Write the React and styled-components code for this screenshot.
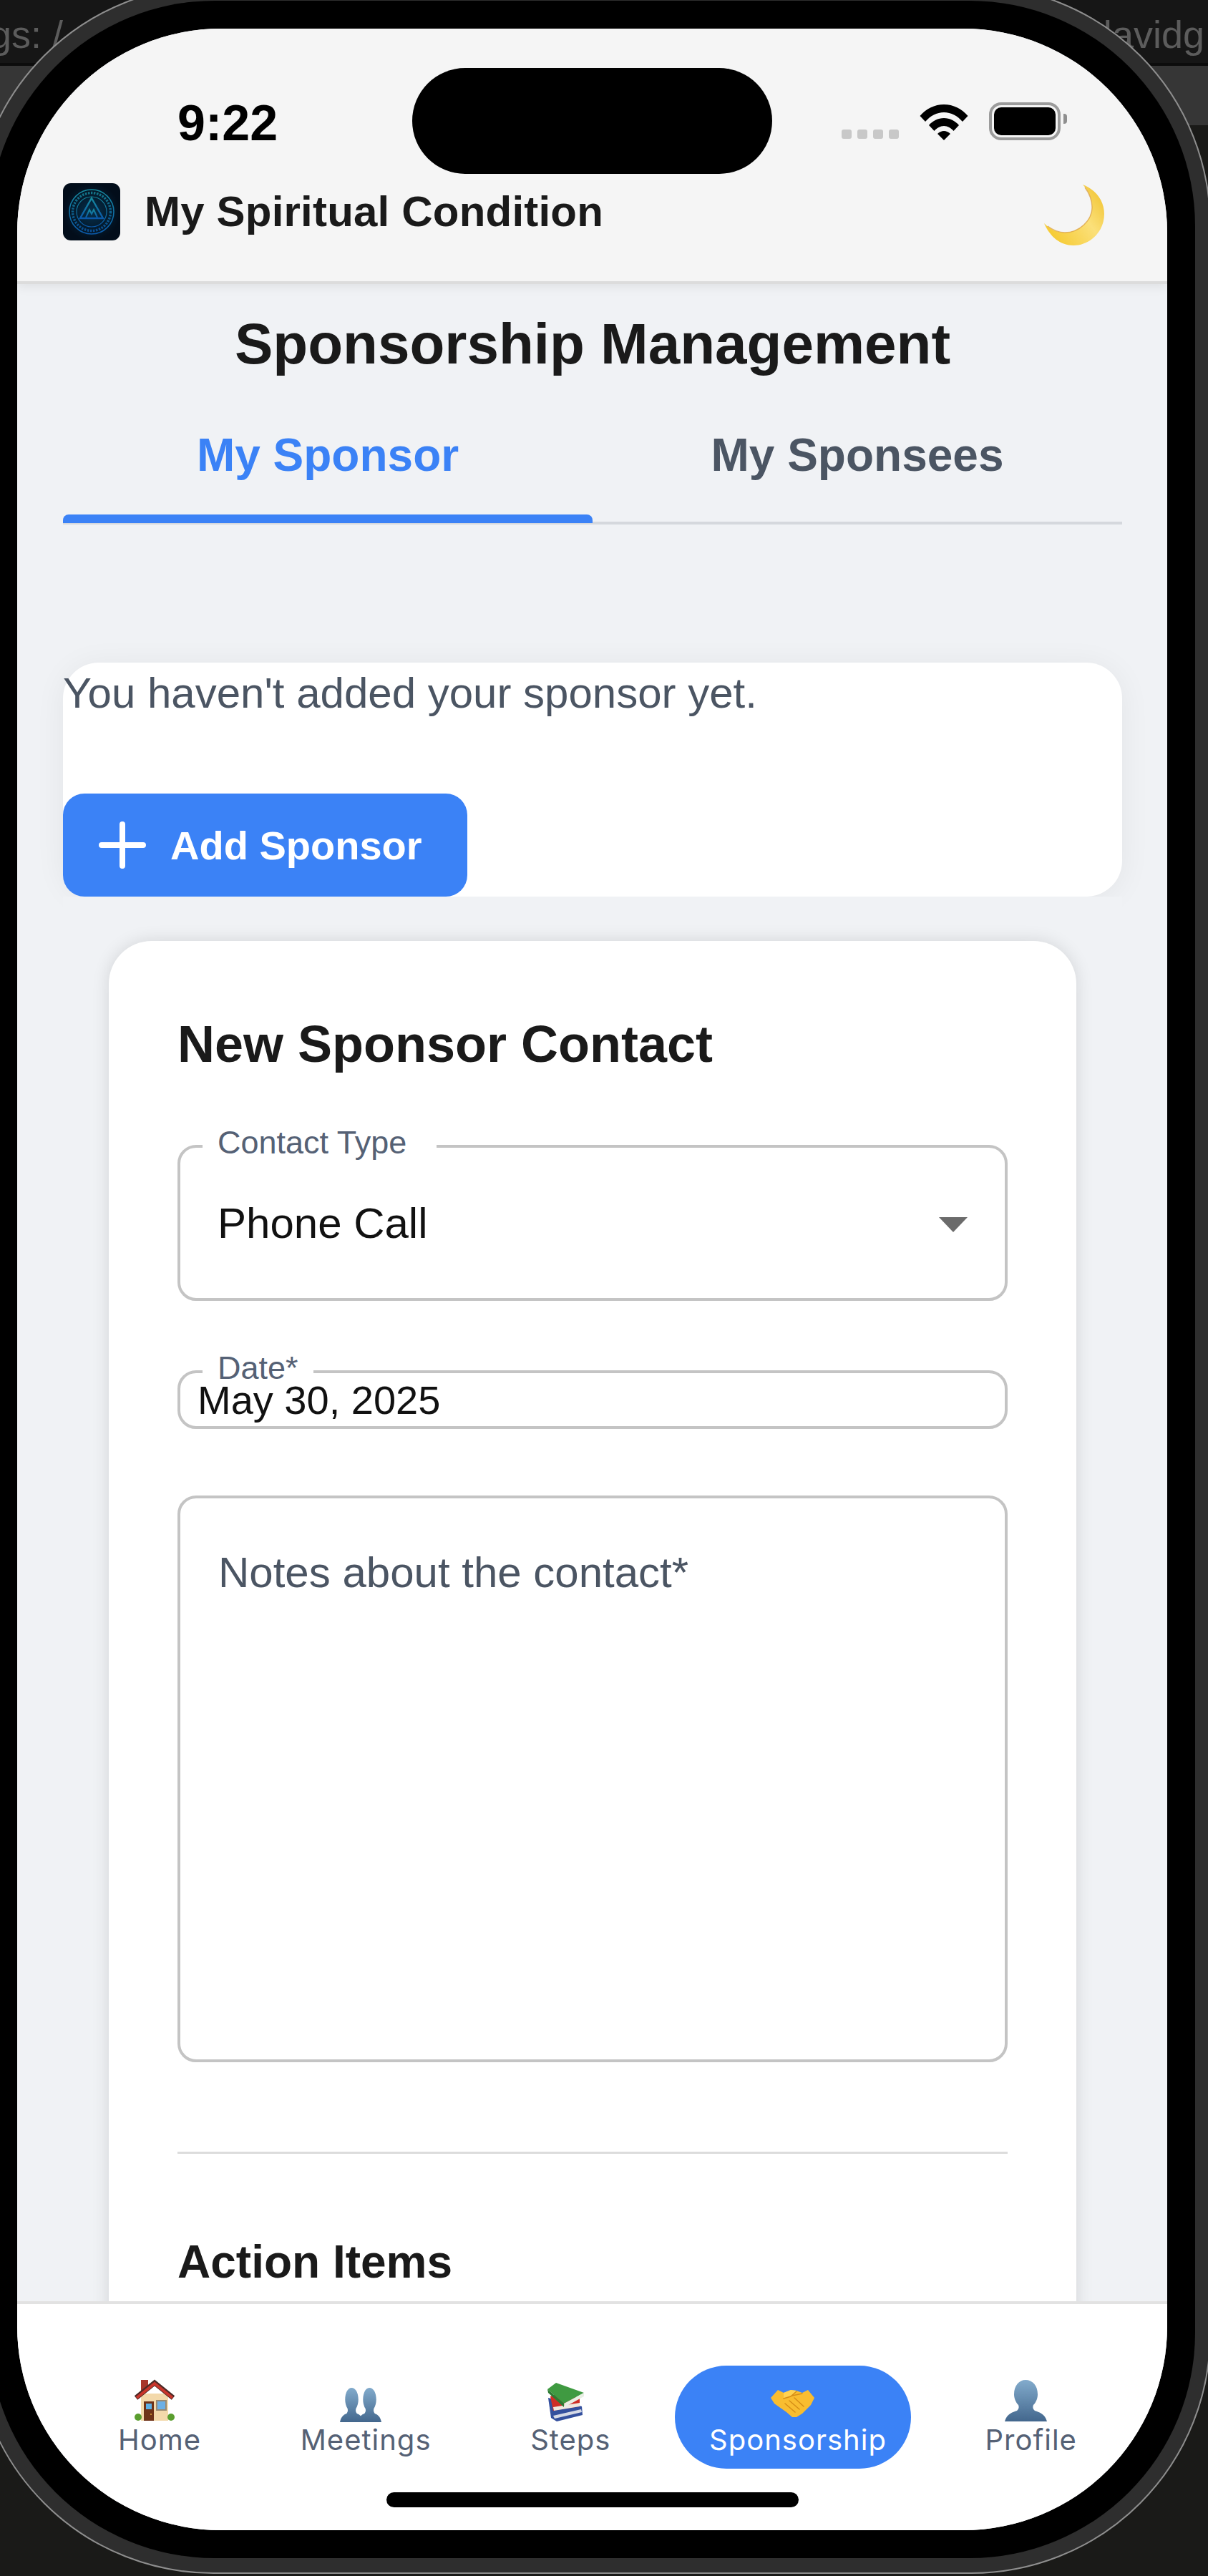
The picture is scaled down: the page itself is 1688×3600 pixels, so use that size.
import React from 'react'
import styled, {createGlobalStyle} from 'styled-components';

const GlobalStyle = createGlobalStyle`
    html, body {
        margin: 0;
        padding: 0;
        background: #1a1a18;
    }
    * {
        box-sizing: border-box;
    }
`;
const Desktop = styled.div`
    position: relative;
    width: 1688px;
    height: 3600px;
    overflow: hidden;
    font-family: "Liberation Sans", Arial, sans-serif;
    background: linear-gradient(to bottom, #161616 0, #161616 88px, #0c0c0c 88px, #0c0c0c 92px, #363636 92px, #363636 175px, #1a1a18 175px);
`;
const DesktopText = styled.div`
    position: absolute;
    top: 18px;
    left: ${props => props.$left};
    right: ${props => props.$right};
    font-size: 54px;
    line-height: 60px;
    color: #5c5c5c;
    white-space: pre;
`;
const Frame = styled.div`
    position: relative;
    width: 1729px;
    height: 3618px;
    margin: -21px 0 0 -37px;
    padding: 20px;
    border: 2px solid #8e8e8e;
    border-radius: 335px;
    background: #2e2e2e;
`;
const Bezel = styled.div`
    height: 100%;
    padding: 39px;
    border-radius: 315px;
    background: #000;
`;
const Screen = styled.div`
    position: relative;
    display: flex;
    flex-direction: column;
    height: 100%;
    overflow: hidden;
    border-radius: 285px;
    background: #f0f2f5;
`;
const Island = styled.div`
    position: absolute;
    top: 55px;
    left: 552px;
    width: 503px;
    height: 148px;
    border-radius: 74px;
    background: #000;
    z-index: 3;
`;
const Header = styled.header`
    position: relative;
    flex: none;
    height: 357px;
    background: #f5f5f5;
    border-bottom: 4px solid #dcdcdc;
    box-shadow: 0 4px 14px rgba(0, 0, 0, 0.07);
    z-index: 2;
`;
const StatusBar = styled.div`
    display: flex;
    justify-content: space-between;
    align-items: flex-end;
    height: 216px;
    padding: 100px 149px 60px 224px;
`;
const Time = styled.div`
    margin-bottom: -6px;
    font-size: 70px;
    line-height: 59px;
    font-weight: 700;
    color: #000;
`;
const StatusIcons = styled.div`
    display: flex;
    align-items: flex-end;
    gap: 29px;
`;
const SignalDots = styled.div`
    display: flex;
    gap: 8px;
    margin-bottom: 2px;
`;
const SignalDot = styled.span`
    width: 14px;
    height: 13px;
    border-radius: 3px;
    background: #c8c8c8;
`;
const Battery = styled.div`
    position: relative;
    width: 100px;
    height: 53px;
    padding: 3px;
    border: 4px solid #9b9b9b;
    border-radius: 17px;
    &::after {
        content: '';
        position: absolute;
        top: 12px;
        right: -13px;
        width: 5px;
        height: 14px;
        border-radius: 0 4px 4px 0;
        background: #8f8f8f;
    }
`;
const BatteryFill = styled.div`
    height: 100%;
    border-radius: 10px;
    background: #000;
`;
const AppBar = styled.div`
    display: flex;
    justify-content: space-between;
    align-items: flex-start;
    padding: 0 88px 0 64px;
`;
const Brand = styled.div`
    display: flex;
    align-items: center;
    gap: 34px;
`;
const AppTitle = styled.div`
    font-size: 60px;
    line-height: 80px;
    font-weight: 700;
    letter-spacing: 0.2px;
    color: #1a1a1a;
`;
const Content = styled.main`
    flex: 1;
    min-height: 0;
    overflow: hidden;
    padding: 0 63px 0 64px;
`;
const PageTitle = styled.h1`
    margin: 38px 0 0;
    font-size: 80px;
    line-height: 92px;
    font-weight: 700;
    text-align: center;
    color: #1a1a1a;
`;
const Tabs = styled.div`
    display: flex;
    margin-top: 46px;
    border-bottom: 4px solid #d5d8dd;
`;
const Tab = styled.div`
    position: relative;
    flex: 1;
    height: 156px;
    padding-top: 26px;
    font-size: 64px;
    line-height: 74px;
    font-weight: 700;
    text-align: center;
    color: ${props => props.$active ? '#3b82f6' : '#4b5563'};
    &::after {
        content: '';
        display: ${props => props.$active ? 'block' : 'none'};
        position: absolute;
        left: 0;
        right: 0;
        bottom: -2px;
        height: 12px;
        border-radius: 8px 8px 0 0;
        background: #3b82f6;
    }
`;
const EmptyCard = styled.section`
    margin-top: 193px;
    height: 327px;
    border-radius: 50px;
    background: #fff;
    box-shadow: 0 4px 44px rgba(0, 0, 0, 0.06);
`;
const EmptyText = styled.p`
    margin: 0;
    font-size: 60px;
    line-height: 86px;
    color: #4b5563;
`;
const AddButton = styled.button`
    display: inline-flex;
    align-items: center;
    gap: 34px;
    width: 565px;
    height: 144px;
    margin-top: 97px;
    padding: 0 0 0 50px;
    border: 0;
    border-radius: 30px;
    background: #3b82f6;
    font-family: inherit;
    font-size: 56px;
    font-weight: 700;
    color: #fff;
`;
const ShadowCover = styled.div`
    height: 62px;
    background: #f0f2f5;
`;
const FormCard = styled.section`
    margin: 0 64px;
    padding: 96px 96px 0;
    height: 2400px;
    border-radius: 60px;
    background: #fff;
    box-shadow: 0 0 24px rgba(0, 0, 0, 0.12);
`;
const FormTitle = styled.h2`
    margin: 0;
    font-size: 72px;
    line-height: 96px;
    font-weight: 700;
    color: #1a1a1a;
`;
const Field = styled.fieldset`
    display: block;
    min-width: 0;
    margin: ${props => props.$margin};
    padding: ${props => props.$padding};
    border: 4px solid #c4c4c4;
    border-radius: 26px;
`;
const FieldLabel = styled.legend`
    margin-left: 31px;
    padding: 0 ${props => props.$gapRight || '21px'} 10px 21px;
    font-size: 45px;
    line-height: 44px;
    color: #556175;
`;
const SelectRow = styled.div`
    display: flex;
    justify-content: space-between;
    align-items: center;
    height: 70px;
    padding: 0 52px;
`;
const SelectValue = styled.div`
    font-size: 60px;
    line-height: 70px;
    color: #111;
`;
const SelectArrow = styled.span`
    width: 0;
    height: 0;
    margin-top: 2px;
    border-left: 20px solid transparent;
    border-right: 20px solid transparent;
    border-top: 21px solid #6b6b6b;
`;
const DateValue = styled.div`
    margin-top: -12px;
    padding-left: 24px;
    font-size: 56px;
    line-height: 50px;
    color: #111;
`;
const NotesInput = styled.textarea`
    display: block;
    width: 100%;
    height: 792px;
    margin: 93px 0 0;
    padding: 68px 53px;
    border: 4px solid #c4c4c4;
    border-radius: 26px;
    outline: none;
    resize: none;
    background: #fff;
    font-family: inherit;
    font-size: 60px;
    line-height: 72px;
    &::placeholder {
        color: #4b5563;
        opacity: 1;
    }
`;
const Divider = styled.hr`
    height: 3px;
    margin: 125px 0 0;
    border: 0;
    background: #dcdcdc;
`;
const SectionTitle = styled.h3`
    margin: 113px 0 0;
    font-size: 64px;
    line-height: 76px;
    font-weight: 700;
    color: #1a1a1a;
`;
const BottomNav = styled.nav`
    position: relative;
    flex: none;
    display: flex;
    justify-content: space-between;
    height: 320px;
    padding: 86px 83px 0 98px;
    border-top: 4px solid #e2e2e2;
    background: #fff;
    z-index: 2;
`;
const NavItem = styled.div`
    display: flex;
    flex-direction: column;
    align-items: center;
    height: 144px;
    margin: ${props => props.$active ? '0 8px 0 -6px' : '0'};
    padding: ${props => props.$active ? '19px 34px 0 48px' : '19px 43px 0'};
    border-radius: 72px;
    background: ${props => props.$active ? '#3b82f6' : 'transparent'};
    color: ${props => props.$active ? '#fff' : '#556175'};
`;
const NavIcon = styled.div`
    display: flex;
    align-items: flex-end;
    justify-content: center;
    height: 60px;
    margin-right: 14px;
`;
const NavLabel = styled.div`
    font-family: Inter, "Liberation Sans", sans-serif;
    font-size: 40px;
    line-height: 50px;
    letter-spacing: 1px;
`;
const HomeIndicator = styled.div`
    position: absolute;
    top: 263px;
    left: 516px;
    width: 576px;
    height: 21px;
    border-radius: 11px;
    background: #000;
`;

function WifiIcon() {
    return (
        <svg width="68" height="50" viewBox="0 0 68 50" fill="#000">
            <path d="M0.5 16C9 6 21 0 34 0C47 0 59 6 67.5 16L60 24C53 16 44 11 34 11C24 11 15 16 8 24Z"/>
            <path d="M13 29C18 23 26 19 34 19C42 19 50 23 55 29L47.5 37C44 33 39 30 34 30C29 30 24 33 20.5 37Z"/>
            <path d="M25 41C27 39 31 37 34 37C37 37 41 39 43 41L34 50Z"/>
        </svg>
    )
}
function LogoIcon() {
    return (
        <svg width="80" height="80" viewBox="0 0 80 80">
            <defs>
                <radialGradient id="logoBg">
                    <stop offset="0" stopColor="#06304c"/>
                    <stop offset="1" stopColor="#020d1a"/>
                </radialGradient>
                <linearGradient id="logoLine" x1="0" y1="0" x2="0" y2="1">
                    <stop offset="0" stopColor="#178a9e"/>
                    <stop offset="1" stopColor="#0a58a8"/>
                </linearGradient>
            </defs>
            <rect width="80" height="80" rx="11" fill="url(#logoBg)"/>
            <g fill="none" stroke="url(#logoLine)">
                <circle cx="40" cy="40" r="31" strokeWidth="1.6"/>
                <circle cx="40" cy="40" r="26.5" strokeWidth="3.5" strokeDasharray="2.5 1.6" opacity="0.8"/>
                <circle cx="40" cy="40" r="21" strokeWidth="1.2"/>
                <path d="M40 21L56 49H24Z" strokeWidth="2.4"/>
                <path d="M32 48L37 37L40 43L43 37L48 48" strokeWidth="2"/>
            </g>
        </svg>
    )
}
function MoonIcon() {
    return (
        <svg width="85" height="88" viewBox="0 0 85 88">
            <defs>
                <linearGradient id="moonFill" x1="0.2" y1="0.9" x2="1" y2="0.3">
                    <stop offset="0" stopColor="#f6cc38"/>
                    <stop offset="0.6" stopColor="#fbe07a"/>
                    <stop offset="1" stopColor="#f3c93f"/>
                </linearGradient>
            </defs>
            <path fill="url(#moonFill)" d="M55 2C75 10 85 26 85 43C85 68 65 87 42 87C24 87 9 75 1 56C10 65 20 69 30 69C50 69 68 52 68 34C68 22 63 10 55 2Z"/>
            <path fill="none" stroke="#d99a3a" strokeWidth="1.4" opacity="0.7" d="M6 60C14 66 22 69 30 69C50 69 68 52 68 34C68 24 64 14 58 6"/>
        </svg>
    )
}
function PlusIcon() {
    return (
        <svg width="66" height="66" viewBox="0 0 66 66" fill="none" stroke="#fff" strokeWidth="8" strokeLinecap="round">
            <path d="M33 4V62M4 33H62"/>
        </svg>
    )
}
function HouseIcon() {
    return (
        <svg width="58" height="60" viewBox="0 0 58 60">
            <rect x="10" y="1" width="10" height="16" fill="#a8372c"/>
            <rect x="10" y="20" width="38" height="38" fill="#f3d9ab"/>
            <path d="M3 26L29 5L55 26" fill="none" stroke="#4d2a26" strokeWidth="7"/>
            <path d="M4 26L29 6L54 26" fill="none" stroke="#c9352b" strokeWidth="4"/>
            <rect x="14" y="31" width="14" height="27" fill="#6e3218"/>
            <rect x="17" y="34" width="8" height="8" fill="#5db0e6"/>
            <rect x="32" y="30" width="13" height="13" fill="#6db0e5" stroke="#9a8a72" strokeWidth="2"/>
            <circle cx="24" cy="49" r="1" fill="#e2a93a"/>
            <circle cx="6" cy="53" r="5" fill="#5a9e2f"/>
            <circle cx="52" cy="53" r="5" fill="#5a9e2f"/>
        </svg>
    )
}
const bustPath = "M29 0C39 0 46 8 46 20C46 25 44 31 40 35C39 38 39 40 42 43C48 45 56 47 59 58L0 58C3 47 11 45 17 43C20 40 20 38 19 35C15 31 13 25 13 20C13 8 20 0 29 0Z";
function BustGradient({id}) {
    return (
        <defs>
            <linearGradient id={id} x1="0" y1="0" x2="0" y2="1">
                <stop offset="0" stopColor="#82abcc"/>
                <stop offset="1" stopColor="#43678d"/>
            </linearGradient>
        </defs>
    )
}
function PeopleIcon() {
    return (
        <svg width="58" height="48" viewBox="0 0 58 48">
            <BustGradient id="peopleFill"/>
            <path fill="url(#peopleFill)" transform="scale(0.56 0.83)" d={bustPath}/>
            <path fill="url(#peopleFill)" transform="translate(25 0) scale(0.56 0.83)" d={bustPath}/>
        </svg>
    )
}
function PersonIcon() {
    return (
        <svg width="59" height="59" viewBox="0 0 59 59">
            <BustGradient id="personFill"/>
            <path fill="url(#personFill)" d={bustPath}/>
        </svg>
    )
}
function BooksIcon() {
    return (
        <svg width="52" height="56" viewBox="0 0 52 56">
            <path d="M2 22L6 50L14 55L50 46L49 34Z" fill="#34509e"/>
            <path d="M9 47L48 38L49 42L11 51Z" fill="#d5d9e6"/>
            <path d="M5 20L9 40L46 34L46 22L20 14Z" fill="#cf2e26"/>
            <path d="M9 35L46 29L46 34L10 40Z" fill="#efe9df"/>
            <path d="M1 10L13 1L52 15L24 30Z" fill="#3f9a41"/>
            <path d="M24 30L52 15V20L25 35Z" fill="#e9efe4"/>
            <path d="M1 10L24 30V35L2 15Z" fill="#2c7a32"/>
        </svg>
    )
}
function HandshakeIcon() {
    return (
        <svg width="62" height="63" viewBox="0 0 62 63">
            <path fill="#f9bd30" d="M0 29L10 18L18 22L28 18L36 19L44 22L52 18L61 29L56 39L44 51L36 56L30 56L22 49L12 42L5 37Z"/>
            <path fill="#ffd251" d="M18 22L28 18L36 19L30 25L24 28L18 30Z"/>
            <path fill="none" stroke="#d68e17" strokeWidth="1.5" strokeLinecap="round" d="M20 37L34 49M26 33L40 45M33 29L46 41M18 30L28 27L36 20M44 23L30 26"/>
        </svg>
    )
}

const navItems = [
    {label: 'Home', icon: <HouseIcon/>},
    {label: 'Meetings', icon: <PeopleIcon/>},
    {label: 'Steps', icon: <BooksIcon/>},
    {label: 'Sponsorship', icon: <HandshakeIcon/>, active: true},
    {label: 'Profile', icon: <PersonIcon/>},
];

function App() {
    return (
        <Desktop>
            <GlobalStyle/>
            <DesktopText $left="-14px">gs: /</DesktopText>
            <DesktopText $right="5px">/davidg</DesktopText>
            <Frame>
                <Bezel>
                    <Screen>
                        <Island/>
                        <Header>
                            <StatusBar>
                                <Time>9:22</Time>
                                <StatusIcons>
                                    <SignalDots>
                                        <SignalDot/><SignalDot/><SignalDot/><SignalDot/>
                                    </SignalDots>
                                    <WifiIcon/>
                                    <Battery><BatteryFill/></Battery>
                                </StatusIcons>
                            </StatusBar>
                            <AppBar>
                                <Brand>
                                    <LogoIcon/>
                                    <AppTitle>My Spiritual Condition</AppTitle>
                                </Brand>
                                <MoonIcon/>
                            </AppBar>
                        </Header>
                        <Content>
                            <PageTitle>Sponsorship Management</PageTitle>
                            <Tabs>
                                <Tab $active>My Sponsor</Tab>
                                <Tab>My Sponsees</Tab>
                            </Tabs>
                            <EmptyCard>
                                <EmptyText>You haven't added your sponsor yet.</EmptyText>
                                <AddButton><PlusIcon/>Add Sponsor</AddButton>
                            </EmptyCard>
                            <ShadowCover/>
                            <FormCard>
                                <FormTitle>New Sponsor Contact</FormTitle>
                                <Field $margin="68px 0 0" $padding="46px 0 69px">
                                    <FieldLabel $gapRight="42px">Contact Type</FieldLabel>
                                    <SelectRow>
                                        <SelectValue>Phone Call</SelectValue>
                                        <SelectArrow/>
                                    </SelectRow>
                                </Field>
                                <Field $margin="72px 0 0" $padding="0 0 11px">
                                    <FieldLabel>Date*</FieldLabel>
                                    <DateValue>May 30, 2025</DateValue>
                                </Field>
                                <NotesInput placeholder="Notes about the contact*"/>
                                <Divider/>
                                <SectionTitle>Action Items</SectionTitle>
                            </FormCard>
                        </Content>
                        <BottomNav>
                            {navItems.map(item => (
                                <NavItem key={item.label} $active={item.active}>
                                    <NavIcon>{item.icon}</NavIcon>
                                    <NavLabel>{item.label}</NavLabel>
                                </NavItem>
                            ))}
                            <HomeIndicator/>
                        </BottomNav>
                    </Screen>
                </Bezel>
            </Frame>
        </Desktop>
    )
}

export default App
